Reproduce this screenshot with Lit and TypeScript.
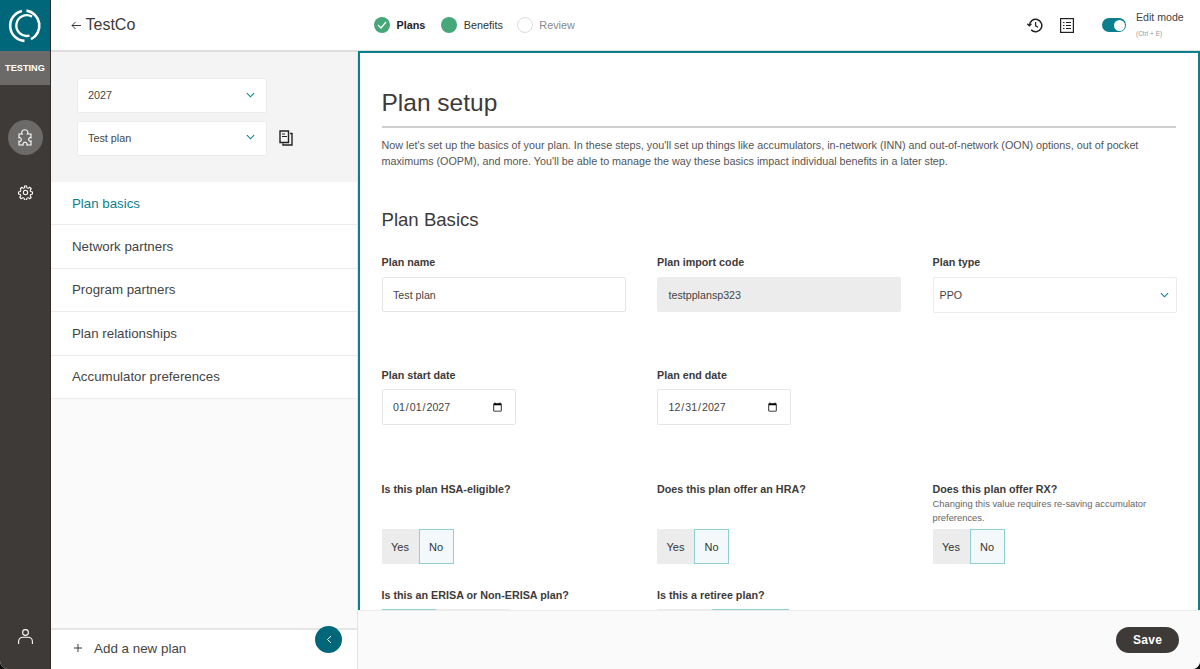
import { LitElement, html, css } from "lit";
import { customElement } from "lit/decorators.js";

const chevron = html`<svg class="chev" width="9" height="6" viewBox="0 0 10 6" fill="none"><path d="M1 1l4 4 4-4" stroke="#0b7f8c" stroke-width="1.2"/></svg>`;

@customElement("app-root")
export class AppRoot extends LitElement {
  static styles = css`
    :host { display: block; width: 100%; height: 100vh; background: #111; font-family: "Liberation Sans", Arial, sans-serif; color: #3d3a38; }
    * { box-sizing: border-box; }
    .app { display: grid; grid-template-columns: 51px 1fr; height: 100%; overflow: hidden; border-radius: 0 0 8px 8px; background: #fff; }
    .rail { background: #3d3a38; display: flex; flex-direction: column; align-items: center; border-right: 1px solid #2f2c2a; }
    .logo { width: 100%; height: 51px; background: #00677a; display: flex; align-items: center; justify-content: center; }
    .env { width: 100%; height: 34px; background: #6b6a69; color: #fff; font-size: 9.2px; font-weight: 700; text-align: center; line-height: 35px; }
    .puzzle { width: 35px; height: 35px; border-radius: 50%; background: #6b6a69; margin-top: 35px; display: flex; align-items: center; justify-content: center; }
    .gear { margin-top: 30px; display: flex; }
    .user { margin-top: auto; margin-bottom: 25px; display: flex; }
    .right { display: flex; flex-direction: column; min-width: 0; min-height: 0; }
    .top { height: 52px; flex: none; display: flex; align-items: center; border-bottom: 2px solid #dedede; background: #fff; padding-right: 16px; }
    .back { width: 323px; padding-left: 20px; font-size: 16px; display: flex; align-items: center; gap: 4.5px; color: #3d3a38; }
    .back svg { margin-top: 1px; }
    .steps { display: flex; align-items: center; font-size: 10.8px; }
    .dot { width: 16px; height: 16px; border-radius: 50%; background: #46a87a; display: flex; align-items: center; justify-content: center; margin-right: 6.5px; }
    .dot.empty { background: #fff; border: 1px solid #dcdcdc; }
    .st { margin-right: 16px; }
    .st.b { font-weight: 700; color: #222; margin-right: 16px; }
    .st.d { color: #8a8a8a; }
    .st.n { color: #333; margin-right: 14px; }
    .tools { margin-left: auto; display: flex; align-items: center; }
    .tools svg { display: block; }
    .sw { width: 24px; height: 14px; border-radius: 7px; background: #0b7f8c; position: relative; margin: 0 10px 0 28px; }
    .sw i { position: absolute; right: 1.5px; top: 1.5px; width: 11px; height: 11px; background: #fff; border-radius: 50%; }
    .em { font-size: 10.6px; line-height: 13px; color: #444; width: 48px; margin-top: -1px; white-space: nowrap; }
    .em small { display: block; font-size: 6.5px; color: #999; line-height: 9px; margin-top: 5px; }
    .body { flex: 1; display: flex; min-height: 0; }
    .side { width: 307px; flex: none; display: flex; flex-direction: column; background: #fafafa; border-right: 1px solid #e4e4e4; position: relative; }
    .pick { background: #f4f4f4; height: 130px; padding: 26px 0 0 26px; display: flex; flex-direction: column; gap: 8px; }
    .pickrow { display: flex; align-items: center; gap: 12px; }
    .sel { width: 190px; height: 35px; background: #fff; border: 1px solid #ececec; border-radius: 2px; display: flex; align-items: center; justify-content: space-between; padding: 0 11px 1px 10px; font-size: 10.8px; color: #444; }
    .pickrow svg { margin-top: -2px; }
    .nav { background: #fff; }
    .nav div { height: 43.4px; display: flex; align-items: center; padding-left: 21px; font-size: 13.3px; color: #444; border-bottom: 1px solid #ececec; }
    .nav div.on { color: #0b7f8c; }
    .add { margin-top: auto; height: 41px; background: #fff; border-top: 2px solid #e6e6e6; display: flex; align-items: center; padding: 0 0 3px 23px; gap: 12px; font-size: 13.4px; color: #444; }
    .col { position: absolute; right: 15px; bottom: 16px; width: 27px; height: 27px; border-radius: 50%; background: #00677a; display: flex; align-items: center; justify-content: center; }
    .main { flex: 1; min-width: 0; display: flex; flex-direction: column; }
    .panel { flex: 1; min-height: 0; overflow: hidden; background: #fff; border: 2px solid #0b7f8c; border-bottom: 0; padding: 0 22px 0 21.5px; margin-top: -1px; }
    h1 { font-size: 24.5px; font-weight: 400; margin: 33px 0 0; line-height: 34px; padding-bottom: 6px; border-bottom: 2px solid #cfcfcf; color: #3d3a38; }
    .intro { font-size: 10.77px; line-height: 16px; margin: 9px 0 0; color: #555; max-width: 790px; }
    h2 { font-size: 18.6px; font-weight: 400; line-height: 24px; margin: 39px 0 0; color: #3d3a38; }
    .grid { display: grid; grid-template-columns: repeat(3, 244px); column-gap: 31.5px; margin-top: 23px; }
    label, .q { display: block; font-size: 10.75px; font-weight: 700; color: #3d3a38; line-height: 14px; }
    .box { display: flex; align-items: center; margin-top: 8px; height: 35px; width: 244px; border: 1px solid #e4e4e4; border-radius: 2px; padding: 0 10.5px; font-size: 10.7px; color: #444; background: #fff; }
    .box.ro { background: #ececec; border-color: #ececec; }
    .box.pt { justify-content: space-between; border-color: #ececec; padding: 0 7px 0 6px; height: 36px; }
    .row2 { margin-top: 55px; }
    input[type="date"] { display: block; margin-top: 7px; width: 134px; height: 36px; border: 1px solid #e4e4e4; border-radius: 2px; padding: 0 10px 0 9.5px; font: 10.6px "Liberation Sans", Arial, sans-serif; color: #444; background: #fff; }
    .row3 { margin-top: 57px; }
    .q3 { min-height: 47px; }
    .hint { font-size: 9.4px; line-height: 13.5px; color: #666; font-weight: 400; margin: 1px 0 0; }
    .yn { display: flex; height: 35px; font-size: 11px; color: #333; }
    .yn span { display: flex; align-items: center; justify-content: center; }
    .yn .y { width: 37px; background: #ececec; }
    .yn .n { width: 35px; background: #f3f9fb; border: 1px solid #90d0d5; }
    .row4 { margin-top: 24px; }
    .seg { display: flex; height: 30px; margin-top: 7px; }
    .seg i { display: block; height: 30px; background: #ececec; }
    .seg i.s { background: #f3f9fb; border-top: 1px solid #90d0d5; }
    .foot { height: 59px; flex: none; background: #fafafa; border-top: 1px solid #ececec; display: flex; align-items: center; justify-content: flex-end; padding-right: 21px; }
    .save { width: 63px; height: 26px; border-radius: 13px; background: #3d3a38; color: #fff; font-size: 12px; font-weight: 700; display: flex; align-items: center; justify-content: center; letter-spacing: 0.3px; margin-top: -1px; }
  `;

  private yn() {
    return html`<div class="yn"><span class="y">Yes</span><span class="n">No</span></div>`;
  }

  render() {
    return html`<div class="app">
      <aside class="rail">
        <div class="logo">
          <svg width="34" height="36" viewBox="0 0 34 36" fill="none" stroke="#fff">
            <path d="M18.5 2.6A15.2 15.2 0 0 1 23 31.2" stroke-width="2.6"/>
            <path d="M16.5 32.9A15.2 15.2 0 0 1 14 2.9" stroke-width="2.6"/>
            <path d="M24 8.6A10.4 10.4 0 1 0 21.5 27.6" stroke-width="2.4"/>
          </svg>
        </div>
        <div class="env">TESTING</div>
        <div class="puzzle">
          <svg width="14" height="17" viewBox="0 0 14 17" fill="none" stroke="#fff" stroke-width="1.1"><path d="M1 5h3.2c-.9-1.200-.6-4.300 2.600-4.300s3.500 3.100 2.600 4.300H13v3.800c-1-.6-2.300 0-2.300 1.600s1.300 2.200 2.300 1.600V16H8.900c.6-1.200-.1-2.700-1.900-2.700s-2.500 1.500-1.900 2.700H1v-3.800c1 .6 2.300 0 2.300-1.600S2 8.200 1 8.800z"/></svg>
        </div>
        <div class="gear">
          <svg width="15" height="15" viewBox="0 0 24 24" fill="none" stroke="#fff" stroke-width="1.7" stroke-linejoin="round"><circle cx="12" cy="12" r="3.5"/><path d="M10.300 1.500h3.400l.6 3.100 1.900.8 2.600-1.800 2.400 2.400-1.800 2.600.8 1.900 3 .6v3.400l-3 .6-.8 1.900 1.800 2.600-2.400 2.400-2.600-1.800-1.900.8-.6 3h-3.400l-.6-3-1.900-.8-2.600 1.800-2.400-2.400 1.800-2.600-.8-1.900-3-.6v-3.400l3-.6.8-1.900L3.800 6l2.400-2.400 2.600 1.800 1.900-.8z"/></svg>
        </div>
        <div class="user">
          <svg width="15" height="15" viewBox="0 0 15 15" fill="none" stroke="#fff" stroke-width="1.1"><circle cx="7.5" cy="3.5" r="2.9"/><path d="M.6 15v-2.500c0-2.600 2-4.300 4.300-4.300h5.200c2.300 0 4.300 1.700 4.300 4.300V15"/></svg>
        </div>
      </aside>
      <div class="right">
        <header class="top">
          <div class="back">
            <svg width="10" height="9" viewBox="0 0 10 9" fill="none" stroke="#3d3a38" stroke-width="1"><path d="M10 4.500H1M4.500 1L1 4.500 4.500 8"/></svg>
            TestCo
          </div>
          <div class="steps">
            <div class="dot"><svg width="10" height="8" viewBox="0 0 10 8" fill="none" stroke="#fff" stroke-width="1.2"><path d="M1 4l3 3 5-6"/></svg></div>
            <span class="st b">Plans</span>
            <div class="dot"></div>
            <span class="st n">Benefits</span>
            <div class="dot empty"></div>
            <span class="st d">Review</span>
          </div>
          <div class="tools">
            <svg width="16" height="15" viewBox="0 0 16 15" fill="none" stroke="#222" stroke-width="1.5"><path d="M2.400 7.500a6.200 6.200 0 1 1 1.800 4.400"/><path d="M0.300 5.800l2.100 2 2-2" stroke-width="1.3"/><path d="M8.600 4v3.800l2.500 1.500" stroke-width="1.2"/></svg>
            <svg style="margin-left:17px" width="14" height="15" viewBox="0 0 14 15" fill="none" stroke="#222"><rect x=".6" y=".6" width="12.8" height="13.8" stroke-width="1.2"/><path d="M3 4.500h1.500M6 4.500h5M3 7.500h1.500M6 7.500h5M3 10.500h1.500M6 10.500h5" stroke-width="1.2"/></svg>
            <div class="sw"><i></i></div>
            <div class="em">Edit mode<small>(Ctrl + E)</small></div>
          </div>
        </header>
        <div class="body">
          <nav class="side">
            <div class="pick">
              <div class="sel">2027 ${chevron}</div>
              <div class="pickrow">
                <div class="sel">Test plan ${chevron}</div>
                <svg width="14" height="16" viewBox="0 0 14 16" fill="none" stroke="#222" stroke-width="1.4"><path d="M1 1h8.500v11.500H1z"/><path d="M11 3.500h2V15H4v-1.500"/><path d="M3 4h3M3 6.500h5" stroke-width="1"/></svg>
              </div>
            </div>
            <div class="nav">
              <div class="on">Plan basics</div>
              <div>Network partners</div>
              <div>Program partners</div>
              <div>Plan relationships</div>
              <div>Accumulator preferences</div>
            </div>
            <div class="add">
              <svg width="8" height="8" viewBox="0 0 8 8" stroke="#3d3a38" stroke-width="1"><path d="M4 0v8M0 4h8"/></svg>
              Add a new plan
            </div>
            <div class="col"><svg width="6" height="9" viewBox="0 0 6 9" fill="none" stroke="#fff" stroke-width="1"><path d="M5 1L1.500 4.500 5 8"/></svg></div>
          </nav>
          <main class="main">
            <section class="panel">
              <h1>Plan setup</h1>
              <p class="intro">Now let's set up the basics of your plan. In these steps, you'll set up things like accumulators, in-network (INN) and out-of-network (OON) options, out of pocket maximums (OOPM), and more. You'll be able to manage the way these basics impact individual benefits in a later step.</p>
              <h2>Plan Basics</h2>
              <div class="grid">
                <div><label>Plan name</label><div class="box">Test plan</div></div>
                <div><label>Plan import code</label><div class="box ro">testpplansp323</div></div>
                <div><label>Plan type</label><div class="box pt">PPO ${chevron}</div></div>
              </div>
              <div class="grid row2">
                <div><label>Plan start date</label><input type="date" value="2027-01-01" /></div>
                <div><label>Plan end date</label><input type="date" value="2027-12-31" /></div>
              </div>
              <div class="grid row3">
                <div><div class="q3"><div class="q">Is this plan HSA-eligible?</div></div>${this.yn()}</div>
                <div><div class="q3"><div class="q">Does this plan offer an HRA?</div></div>${this.yn()}</div>
                <div><div class="q3"><div class="q">Does this plan offer RX?</div><p class="hint">Changing this value requires re-saving accumulator preferences.</p></div>${this.yn()}</div>
              </div>
              <div class="grid row4">
                <div><div class="q">Is this an ERISA or Non-ERISA plan?</div><div class="seg"><i class="s" style="width:54px"></i><i style="width:74px"></i></div></div>
                <div><div class="q">Is this a retiree plan?</div><div class="seg"><i style="width:55px"></i><i class="s" style="width:77px"></i></div></div>
              </div>
            </section>
            <footer class="foot"><div class="save">Save</div></footer>
          </main>
        </div>
      </div>
    </div>`;
  }
}
